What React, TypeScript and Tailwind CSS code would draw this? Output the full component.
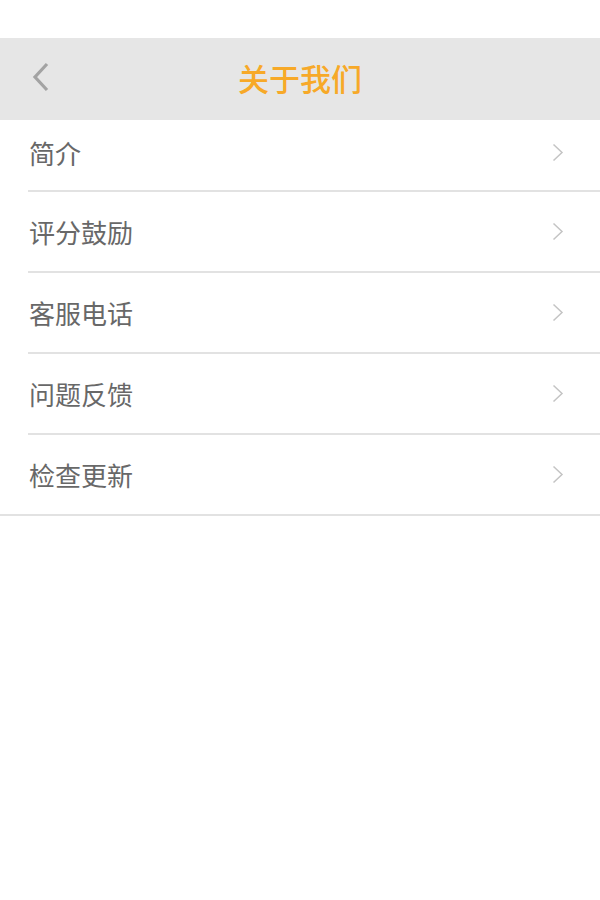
const ITEMS = ['简介', '评分鼓励', '客服电话', '问题反馈', '检查更新'];

const font = { fontFamily: '"Noto Sans CJK SC", "Noto Sans", sans-serif' };

function Chevron() {
    return (
        <svg width="12" height="19" viewBox="0 0 12 19" className="shrink-0">
            <path d="M1.5 1.5 L10 9.5 L1.5 17.5" fill="none" stroke="#c4c4c4" strokeWidth="1.5" />
        </svg>
    );
}

export default function App() {
    return (
        <div className="w-[600px] min-h-[900px] bg-white" style={font}>
            <div className="h-[38px]" />
            <header className="relative h-[82px] bg-[#e6e6e6] flex items-center justify-center">
                <svg
                    width="18"
                    height="30"
                    viewBox="0 0 18 30"
                    className="absolute left-[32px] -translate-y-[50%]"
                    style={{ top: '48%' }}
                >
                    <path d="M15 2 L3 15 L15 28" fill="none" stroke="#a3a3a3" strokeWidth="3.2" />
                </svg>
                <h1 className="text-[31px] font-medium leading-none text-[#f7a928] mt-[-4px]">关于我们</h1>
            </header>
            <ul>
                {ITEMS.map((label, i) => (
                    <li key={label}>
                        <div
                            className={`flex items-center justify-between pl-[29px] pr-[36px] ${
                                i === 0 ? 'h-[70px] pb-[5px]' : 'h-[79px]'
                            }`}
                        >
                            <span className="text-[26px] text-[#686868] leading-none">{label}</span>
                            <Chevron />
                        </div>
                        <div
                            className={`h-[2px] bg-[#e2e2e2] ${i === ITEMS.length - 1 ? '' : 'ml-[28px]'}`}
                        />
                    </li>
                ))}
            </ul>
        </div>
    );
}
